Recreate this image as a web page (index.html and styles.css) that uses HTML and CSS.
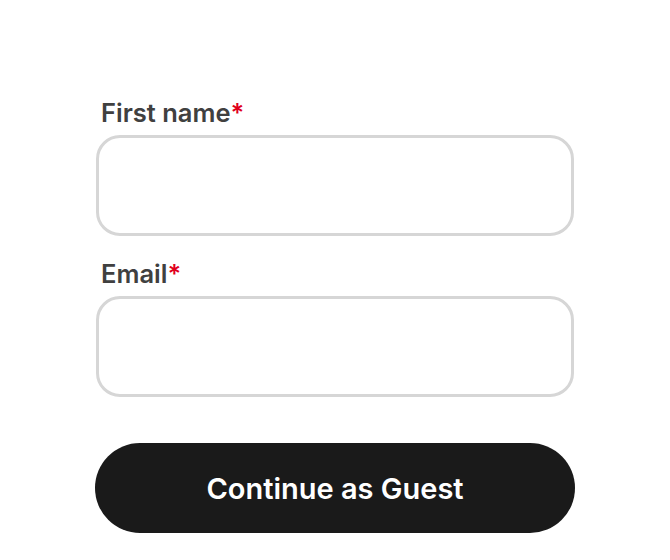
FILE: index.html
```html
<!DOCTYPE html>
<html lang="en">

<head>
    <meta charset="UTF-8">
    <title>Guest checkout</title>
    <link rel="stylesheet" href="styles.css">
</head>

<body>
    <div class="main">
        <form class="guest-form">
            <div class="field">
                <label for="first-name">First name<span class="required">*</span></label>
                <input type="text" id="first-name" name="first-name">
            </div>
            <div class="field">
                <label for="email">Email<span class="required">*</span></label>
                <input type="text" id="email" name="email">
            </div>
            <button type="submit" class="guest-button">Continue as Guest</button>
        </form>
    </div>
</body>

</html>
```

FILE: styles.css
```css
body {
    font-family: Inter, "Noto Sans", sans-serif;
    margin: 0;
    padding: 0;
    background-color: #ffffff;
}

.main {
    display: flex;
    justify-content: center;
    padding-top: 97px;
}

.guest-form {
    width: 480px;
    display: flex;
    flex-direction: column;
}

.field {
    display: flex;
    flex-direction: column;
    margin-bottom: 22px;
}

label {
    font-size: 25.5px;
    font-weight: 600;
    line-height: 32px;
    color: #404040;
    padding-left: 6px;
    margin-bottom: 6px;
}

.required {
    color: #e0001b;
}

input[type=text] {
    height: 101px;
    margin: 0 1px;
    border: 3px solid #d6d6d6;
    border-radius: 24px;
    box-sizing: border-box;
    padding: 0 24px;
    font-family: inherit;
    font-size: 24px;
    outline: none;
}

.guest-button {
    margin-top: 24px;
    height: 90px;
    border: none;
    border-radius: 45px;
    background-color: #1a1a1a;
    color: #ffffff;
    font-family: inherit;
    font-size: 29px;
    font-weight: 600;
    cursor: pointer;
}
```
